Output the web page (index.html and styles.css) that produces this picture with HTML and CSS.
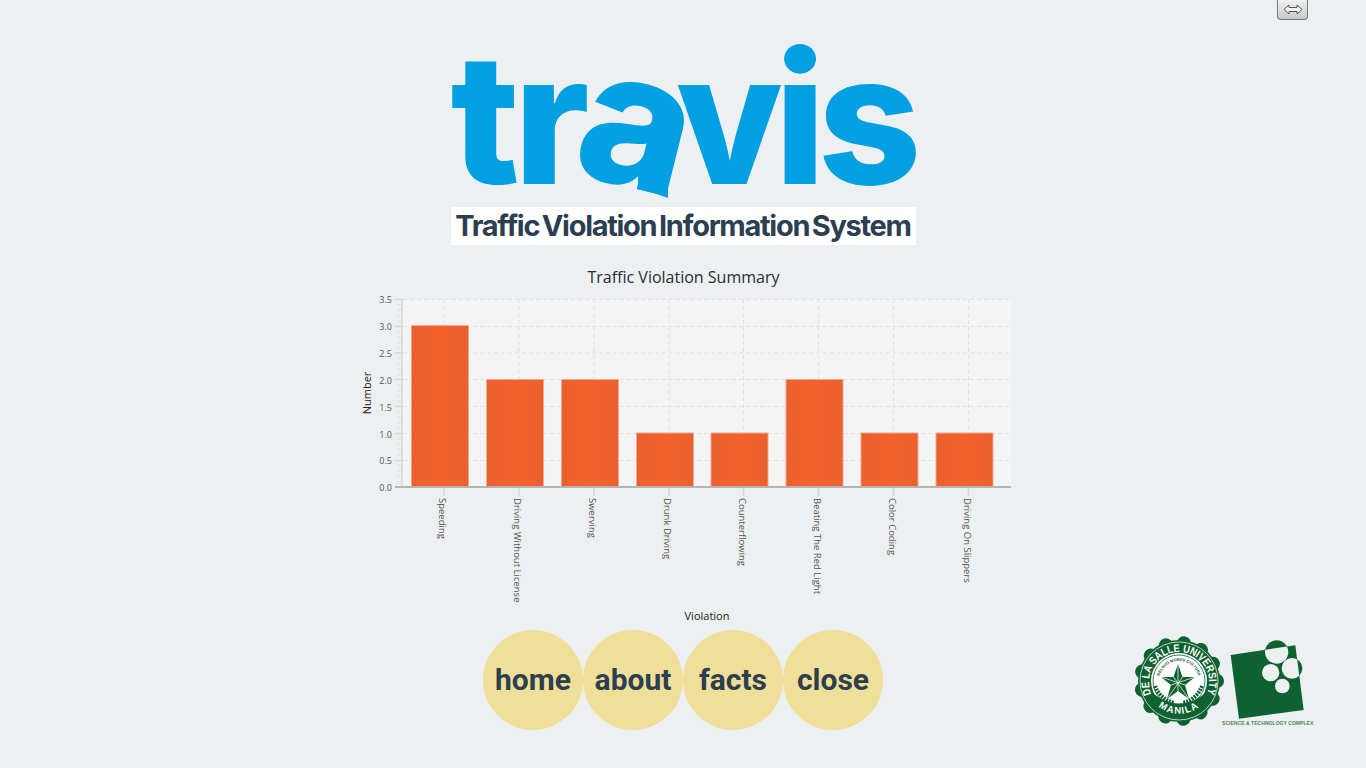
FILE: index.html
```html
<!DOCTYPE html>
<html lang="en">
<head>
    <meta charset="UTF-8">
    <meta name="viewport" content="width=device-width, initial-scale=1.0">
    <title>Travis</title>
    <link rel="stylesheet" href="styles.css">
</head>
<body>

    <div class="topbar">
        <button class="toggler" type="button" aria-label="Toggle panel">
            <svg width="20" height="11" viewBox="0 0 20 11">
                <path d="M1 5.5 L6 1 V3.5 H14 V1 L19 5.5 L14 10 V7.5 H6 V10 Z" fill="#f4f4f4" stroke="#555" stroke-width="1"/>
            </svg>
        </button>
    </div>

    <header class="brand">
        <div class="logo">
            <span class="logo-t">t</span><span class="logo-r">r</span><span class="logo-a">a</span><span class="logo-v">v</span><span class="logo-i">i</span><span class="logo-s">s</span>
            <svg class="logo-tail" width="60" height="80" viewBox="0 0 60 80">
                <path d="M22 24 L49 12 Q44 35 37 57 V78 Q22 72 7 69 V55 L15 45 Z" fill="#00a0e3"/>
            </svg>
        </div>
        <div class="tagline">Traffic Violation Information System</div>
    </header>

    <svg class="chart" width="670" height="364" viewBox="350 262 670 364">
        <defs>
            <linearGradient id="barFill" x1="0" y1="0" x2="1" y2="0">
                <stop offset="0" stop-color="#ea602e"/>
                <stop offset="0.5" stop-color="#f4622e"/>
                <stop offset="1" stop-color="#ea602e"/>
            </linearGradient>
        </defs>

        <text class="chart-title" x="683.5" y="283" text-anchor="middle">Traffic Violation Summary</text>

        <rect class="plot" x="403" y="299" width="608" height="188"/>

        <g class="grid">
            <path d="M403 299.5 H1011 M403 326.5 H1011 M403 353 H1011 M403 379.5 H1011 M403 406.5 H1011 M403 433.5 H1011 M403 460.5 H1011"/>
            <path d="M444 299 V487 M519 299 V487 M594 299 V487 M669 299 V487 M743.5 299 V487 M818.5 299 V487 M893.5 299 V487 M968.5 299 V487"/>
        </g>

        <g class="ticks-minor">
            <path d="M397 304.5 H402 M397 310 H402 M397 315.5 H402 M397 321 H402 M397 331.5 H402 M397 337 H402 M397 342.5 H402 M397 348 H402 M397 358.5 H402 M397 364 H402 M397 369 H402 M397 374.5 H402 M397 385 H402 M397 390.5 H402 M397 396 H402 M397 401 H402 M397 412 H402 M397 417 H402 M397 422.5 H402 M397 428 H402 M397 439 H402 M397 444 H402 M397 449.5 H402 M397 455 H402 M397 465.5 H402 M397 471 H402 M397 476 H402 M397 481.5 H402"/>
        </g>
        <g class="ticks-major">
            <path d="M395 299.5 H403 M395 326.5 H403 M395 353 H403 M395 379.5 H403 M395 406.5 H403 M395 433.5 H403 M395 460.5 H403"/>
            <path d="M402 299 V487"/>
            <path d="M444 488 V496 M519 488 V496 M594 488 V496 M669 488 V496 M743.5 488 V496 M818.5 488 V496 M893.5 488 V496 M968.5 488 V496"/>
        </g>

        <g class="bars">
            <rect x="411.5" y="325.5" width="57" height="161" fill="url(#barFill)"/>
            <rect x="486.5" y="379.5" width="57" height="107" fill="url(#barFill)"/>
            <rect x="561.5" y="379.5" width="57" height="107" fill="url(#barFill)"/>
            <rect x="636.5" y="433" width="57" height="53.5" fill="url(#barFill)"/>
            <rect x="711" y="433" width="57" height="53.5" fill="url(#barFill)"/>
            <rect x="786" y="379.5" width="57" height="107" fill="url(#barFill)"/>
            <rect x="861" y="433" width="57" height="53.5" fill="url(#barFill)"/>
            <rect x="936" y="433" width="57" height="53.5" fill="url(#barFill)"/>
        </g>

        <path class="axis" d="M395 487 H1011"/>

        <g class="y-labels" text-anchor="end">
            <text x="392" y="303">3.5</text>
            <text x="392" y="330">3.0</text>
            <text x="392" y="357">2.5</text>
            <text x="392" y="383.5">2.0</text>
            <text x="392" y="410.5">1.5</text>
            <text x="392" y="437.5">1.0</text>
            <text x="392" y="464">0.5</text>
            <text x="392" y="491">0.0</text>
        </g>

        <g class="x-labels">
            <text transform="translate(439 498) rotate(90)">Speeding</text>
            <text transform="translate(514 498) rotate(90)">Driving Without License</text>
            <text transform="translate(589 498) rotate(90)">Swerving</text>
            <text transform="translate(664 498) rotate(90)">Drunk Driving</text>
            <text transform="translate(739 498) rotate(90)">Counterflowing</text>
            <text transform="translate(814 498) rotate(90)">Beating The Red Light</text>
            <text transform="translate(888.5 498) rotate(90)">Color Coding</text>
            <text transform="translate(964 498) rotate(90)">Driving On Slippers</text>
        </g>

        <text class="axis-title" transform="translate(371 393) rotate(-90)" text-anchor="middle">Number</text>
        <text class="axis-title" x="707" y="620" text-anchor="middle">Violation</text>
    </svg>

    <footer class="bottom">
        <div></div>
        <nav class="menu">
            <a class="menu-item" href="#">home</a>
            <a class="menu-item" href="#">about</a>
            <a class="menu-item" href="#">facts</a>
            <a class="menu-item" href="#">close</a>
        </nav>
        <div class="partners">
            <svg class="seal" width="90" height="90" viewBox="0 0 90 90">
                <defs>
                    <path id="sealTop" d="M17.5 58 A30 30 0 1 1 72.5 58"/>
                    <path id="sealBottom" d="M14 55 A32.5 32.5 0 0 0 76 55"/>
                    <path id="sealMotto" d="M25 45 A20 20 0 0 1 65 45"/>
                </defs>
                <circle cx="45" cy="45" r="41" fill="#0e6131"/>
                <circle cx="45" cy="45" r="38" fill="none" stroke="#0e6131" stroke-width="14" stroke-linecap="round" stroke-dasharray="0.1 18.27"/>
                <circle cx="45" cy="45" r="39" fill="none" stroke="#e6eeea" stroke-width="0.8"/>
                <text class="seal-name"><textPath href="#sealTop" textLength="118" lengthAdjust="spacingAndGlyphs">DE LA SALLE UNIVERSITY</textPath></text>
                <circle cx="45" cy="45" r="28" fill="#fff"/>
                <circle cx="45" cy="45" r="26" fill="none" stroke="#0e6131" stroke-width="0.8"/>
                <path d="M16 55 Q45 80 74 55 A31 31 0 0 1 16 55 Z" fill="#0e6131"/>
                <text class="seal-manila" text-anchor="middle"><textPath href="#sealBottom" startOffset="50%">MANILA</textPath></text>
                <text class="seal-motto" text-anchor="middle"><textPath href="#sealMotto" startOffset="50%">RELIGIO MORES CULTURA</textPath></text>
                <path d="M44 28 L48.5 41 L61 41 L51 49 L55 63 L44 55 L33 63 L37 49 L27 41 L39.5 41 Z" fill="#0e6131"/>
                <path d="M44 28 V55 M27 41 L51 49 M61 41 L37 49 M33 63 L48.5 41 M55 63 L39.5 41" fill="none" stroke="#fff" stroke-width="0.7"/>
                <path d="M21 50 Q26 63 40 67" fill="none" stroke="#0e6131" stroke-width="4" stroke-dasharray="2 1"/>
                <path d="M68 50 Q63 63 49 67" fill="none" stroke="#0e6131" stroke-width="4" stroke-dasharray="2 1"/>
            </svg>
            <div class="stc">
                <svg width="100" height="84" viewBox="0 0 300 252">
                    <defs>
                        <clipPath id="stcSquare">
                            <path d="M38 57 L232 28 L257 222 L63 248 Z"/>
                        </clipPath>
                    </defs>
                    <circle cx="176" cy="48" r="35" fill="#0e6131"/>
                    <circle cx="222" cy="97" r="31" fill="#0e6131"/>
                    <path d="M38 57 L232 28 L257 222 L63 248 Z" fill="#0e6131"/>
                    <g clip-path="url(#stcSquare)" fill="#ecf0f1">
                        <circle cx="176" cy="48" r="35"/>
                        <circle cx="222" cy="97" r="31"/>
                    </g>
                    <circle cx="158" cy="110" r="26" fill="#ecf0f1"/>
                    <circle cx="193" cy="150" r="22" fill="#ecf0f1"/>
                </svg>
                <span class="stc-name">SCIENCE &amp; TECHNOLOGY COMPLEX</span>
            </div>
        </div>
    </footer>

</body>
</html>
```

FILE: styles.css
```css
html, body {
    margin: 0;
    height: 768px;
    overflow: hidden;
}
body {
    background-color: #ecf0f1;
    font-family: "Open Sans", sans-serif;
    display: flex;
    flex-direction: column;
    align-items: center;
}

.topbar {
    width: 100%;
    height: 20px;
    display: flex;
    justify-content: flex-end;
    padding-right: 58px;
    box-sizing: border-box;
}
.toggler {
    width: 31px;
    height: 20px;
    padding: 0 0 1px;
    display: flex;
    align-items: center;
    justify-content: center;
    border: 1px solid #777;
    border-top: none;
    border-radius: 0 0 4px 4px;
    background: linear-gradient(#f1f1f1, #c8c8c8);
}

.brand {
    width: 465px;
    margin-top: 25px;
}
.logo {
    position: relative;
    height: 162px;
    display: flex;
    font-family: Inter, sans-serif;
    font-weight: 800;
    font-size: 181px;
    line-height: 148px;
    color: #00a0e3;
    white-space: nowrap;
    letter-spacing: -6px;
}
.logo span {
    display: block;
}
.logo-a {
    transform: rotate(14deg) scale(1.04);
}
.logo-v {
    margin-left: -8px;
    transform: scaleX(0.96);
    transform-origin: left;
}
.logo-i {
    margin-left: -7px;
}
.logo-s {
    margin-left: -2px;
}
.logo-tail {
    position: absolute;
    left: 180px;
    top: 75px;
}
.tagline {
    height: 38px;
    background-color: #fff;
    color: #2c3e50;
    font-family: Inter, sans-serif;
    font-weight: 700;
    font-size: 29px;
    line-height: 37px;
    letter-spacing: -1.3px;
    word-spacing: -3px;
    text-align: center;
    white-space: nowrap;
}

.chart {
    display: block;
    margin-top: 17px;
    margin-left: 3px;
    flex: none;
}
.chart-title {
    font-size: 16px;
    fill: #2b2b3a;
}
.plot {
    fill: #f4f4f4;
}
.grid path {
    fill: none;
    stroke: #e0e0e0;
    stroke-width: 1;
    stroke-dasharray: 4 3;
}
.ticks-minor path {
    fill: none;
    stroke: #dcdcdc;
    stroke-width: 1;
}
.ticks-major path {
    fill: none;
    stroke: #d8d8d8;
    stroke-width: 1.5;
}
.bars rect {
    stroke: #f0a890;
    stroke-width: 1;
}
.axis {
    fill: none;
    stroke: #b5b5b5;
    stroke-width: 2;
}
.y-labels text {
    font-size: 9px;
    fill: #555;
}
.x-labels text {
    font-size: 9.5px;
    fill: #555;
}
.axis-title {
    font-size: 11px;
    fill: #222;
}

.bottom {
    width: 100%;
    margin-top: 4px;
    display: grid;
    grid-template-columns: 1fr 400px 1fr;
}
.menu {
    display: flex;
}
.menu-item {
    width: 100px;
    height: 100px;
    border-radius: 50%;
    background-color: #f0df99;
    color: #2c3e50;
    font-family: Roboto, sans-serif;
    font-weight: 700;
    font-size: 30px;
    line-height: 100px;
    text-align: center;
    text-decoration: none;
}

.partners {
    display: flex;
    align-items: flex-start;
    padding-left: 251px;
}
.seal {
    flex: none;
    margin-top: 6px;
    margin-right: -6px;
}
.seal-name {
    font-family: "Liberation Sans", sans-serif;
    font-size: 11px;
    font-weight: 700;
    fill: #fff;
}
.seal-manila {
    font-family: "Liberation Sans", sans-serif;
    font-size: 9.5px;
    font-weight: 700;
    fill: #fff;
    letter-spacing: 1.2px;
}
.seal-motto {
    font-family: "Liberation Sans", sans-serif;
    font-size: 4px;
    font-weight: 700;
    fill: #0e6131;
}
.stc {
    width: 100px;
    margin-top: 6px;
    display: flex;
    flex-direction: column;
}
.stc svg {
    display: block;
    flex: none;
}
.stc-name {
    margin-left: 4px;
    font-family: "Liberation Sans", sans-serif;
    font-size: 5px;
    line-height: 7px;
    font-weight: 700;
    letter-spacing: 0.05px;
    color: #4d8564;
    white-space: nowrap;
}
```
